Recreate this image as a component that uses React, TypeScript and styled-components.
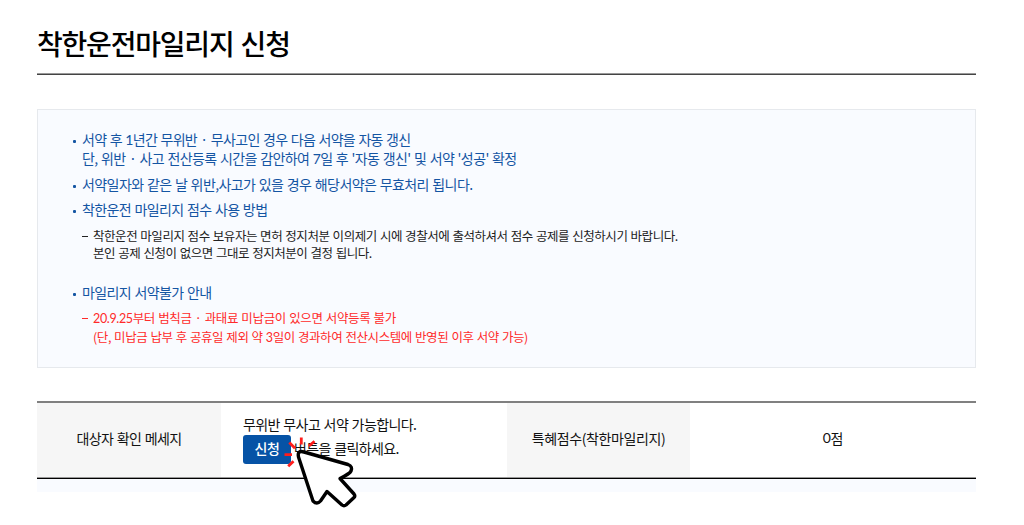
import styled, { createGlobalStyle } from "styled-components";

const BLUE = "#1455a3";
const RED = "#ff2a2a";

export default function App() {
  return (
    <>
      <GlobalStyle />
      <Page>
        <Title>착한운전마일리지 신청</Title>
        <Notice>
          <Item>
            <Line track={-0.67}>서약 후 <Num>1</Num>년간 무위반 · 무사고인 경우 다음 서약을 자동 갱신</Line>
            <Line track={-0.6}>단, 위반 · 사고 전산등록 시간을 감안하여 <Num>7</Num>일 후 '자동 갱신' 및 서약 '성공' 확정</Line>
          </Item>
          <Item>
            <Line track={-0.58}>서약일자와 같은 날 위반,사고가 있을 경우 해당서약은 무효처리 됩니다.</Line>
          </Item>
          <Item>
            <Line track={-0.6}>착한운전 마일리지 점수 사용 방법</Line>
          </Item>
          <SubItem color="#222">
            <Line track={-0.45}>착한운전 마일리지 점수 보유자는 면허 정지처분 이의제기 시에 경찰서에 출석하셔서 점수 공제를 신청하시기 바랍니다.</Line>
            <Line track={-0.45}>본인 공제 신청이 없으면 그대로 정지처분이 결정 됩니다.</Line>
          </SubItem>
          <Spacer />
          <Item>
            <Line track={-0.6}>마일리지 서약불가 안내</Line>
          </Item>
          <SubItem color={RED}>
            <Line track={-0.35}><Num>20.9.25</Num>부터 범칙금 · 과태료 미납금이 있으면 서약등록 불가</Line>
            <Line track={-0.42}>(단, 미납금 납부 후 공휴일 제외 약 <Num>3</Num>일이 경과하여 전산시스템에 반영된 이후 서약 가능)</Line>
          </SubItem>
        </Notice>
        <Table>
          <HeadCell>
            <Line track={-0.6}>대상자 확인 메세지</Line>
          </HeadCell>
          <MessageCell>
            <Line track={-0.58}>무위반 무사고 서약 가능합니다.</Line>
            <ButtonRow>
              <ApplyButton>
                신청
                <Pointer />
              </ApplyButton>
              <Line track={-0.6}>버튼을 클릭하세요.</Line>
            </ButtonRow>
          </MessageCell>
          <HeadCell>
            <Line track={-0.38}>특혜점수(착한마일리지)</Line>
          </HeadCell>
          <ScoreCell>
            <Num>0</Num>점
          </ScoreCell>
        </Table>
        <Footer />
      </Page>
    </>
  );
}

function Pointer() {
  return (
    <PointerIcon viewBox="282 434 76 76" width="76" height="76" fill="none">
      <path
        d="M304 452 L348 464.5 Q353 466.5 351 471 Q350 473.5 340 478.5 L354 494 Q355.5 496 354 497.5 L346 505 Q344 506.5 342 505 L327 491.5 L320.5 501 Q317 505 313 501 L298.5 457 Q297 450 304 452 Z"
        fill="#fff"
        stroke="#000"
        strokeWidth="3.4"
        strokeLinejoin="round"
      />
      <path
        d="M301.3 437.5V444.5M289.3 442.5L295 448.3M309 446L314.5 441.3M284.5 454.7H292M288.2 466.3L293.5 461.3"
        stroke="#ff1c1c"
        strokeWidth="2.8"
      />
    </PointerIcon>
  );
}

const GlobalStyle = createGlobalStyle`
  * {
    box-sizing: border-box;
  }
  body {
    margin: 0;
    background: #fff;
    color: #111;
    font-family: "Noto Sans CJK KR", "Noto Sans", sans-serif;
    font-size: 14px;
  }
`;

const Page = styled.main`
  width: 1024px;
  height: 525px;
  padding: 0 48px 0 37px;
  overflow: hidden;
`;

const Title = styled.h1`
  height: 75px;
  margin: 0 0 34px;
  padding-top: 23px;
  border-bottom: 1px solid #444;
  box-shadow: inset 0 -1px #999;
  font-size: 28px;
  font-weight: 500;
  line-height: 40px;
  letter-spacing: -1.2px;
  word-spacing: 2px;
  color: #000;
`;

const Notice = styled.section`
  height: 259px;
  padding: 20px 35px 0;
  border: 1px solid #e6e9ed;
  background: #f9fbff;
`;

const Line = styled.span<{ track: number }>`
  display: block;
  letter-spacing: ${(props) => props.track}px;
  word-spacing: 0.06em;
  white-space: nowrap;
`;

const Num = styled.span`
  font-family: Lato, "Noto Sans", sans-serif;
`;

const Item = styled.div`
  position: relative;
  padding-left: 9px;
  margin-bottom: 6px;
  color: ${BLUE};
  font-size: 14px;
  line-height: 19.4px;

  &::before {
    content: "";
    position: absolute;
    left: 0;
    top: 10px;
    width: 3px;
    height: 3px;
    border-radius: 1px;
    background: ${BLUE};
  }
`;

const SubItem = styled.div`
  position: relative;
  padding-left: 20px;
  color: ${(props) => props.color};
  font-size: 12.5px;
  line-height: 17.5px;

  &::before {
    content: "";
    position: absolute;
    left: 9px;
    top: 10px;
    width: 6px;
    height: 1px;
    background: ${(props) => props.color};
  }

  ${Item} + & {
    padding-top: 1px;
  }
`;

const Spacer = styled.div`
  height: 21px;
`;

const Table = styled.div`
  display: grid;
  grid-template-columns: 184px 286px 183px 1fr;
  height: 78px;
  margin-top: 33px;
  border-top: 2px solid #808080;
  border-bottom: 1px solid #000;
  box-shadow: inset 0 -1px #999;
`;

const HeadCell = styled.div`
  display: flex;
  align-items: center;
  justify-content: center;
  margin-bottom: 1px;
  padding-bottom: 5px;
  background: #f6f6f6;
`;

const MessageCell = styled.div`
  padding: 11px 0 0 22px;
  line-height: 21px;
`;

const ButtonRow = styled.div`
  display: flex;
  align-items: center;
  gap: 3px;

  > span {
    padding-bottom: 2px;
  }
`;

const ApplyButton = styled.div`
  position: relative;
  display: flex;
  align-items: center;
  justify-content: center;
  width: 48px;
  height: 29px;
  padding-bottom: 2px;
  border-radius: 3px;
  background: #0653a6;
  color: #fff;
  font-weight: 500;
  letter-spacing: -0.4px;
`;

const PointerIcon = styled.svg`
  position: absolute;
  left: 39px;
  top: -1px;
  z-index: 1;
`;

const ScoreCell = styled.div`
  display: flex;
  align-items: center;
  justify-content: center;
  padding-bottom: 6px;
  letter-spacing: -0.3px;
`;

const Footer = styled.div`
  height: 13px;
  background: #f9fbff;
`;
